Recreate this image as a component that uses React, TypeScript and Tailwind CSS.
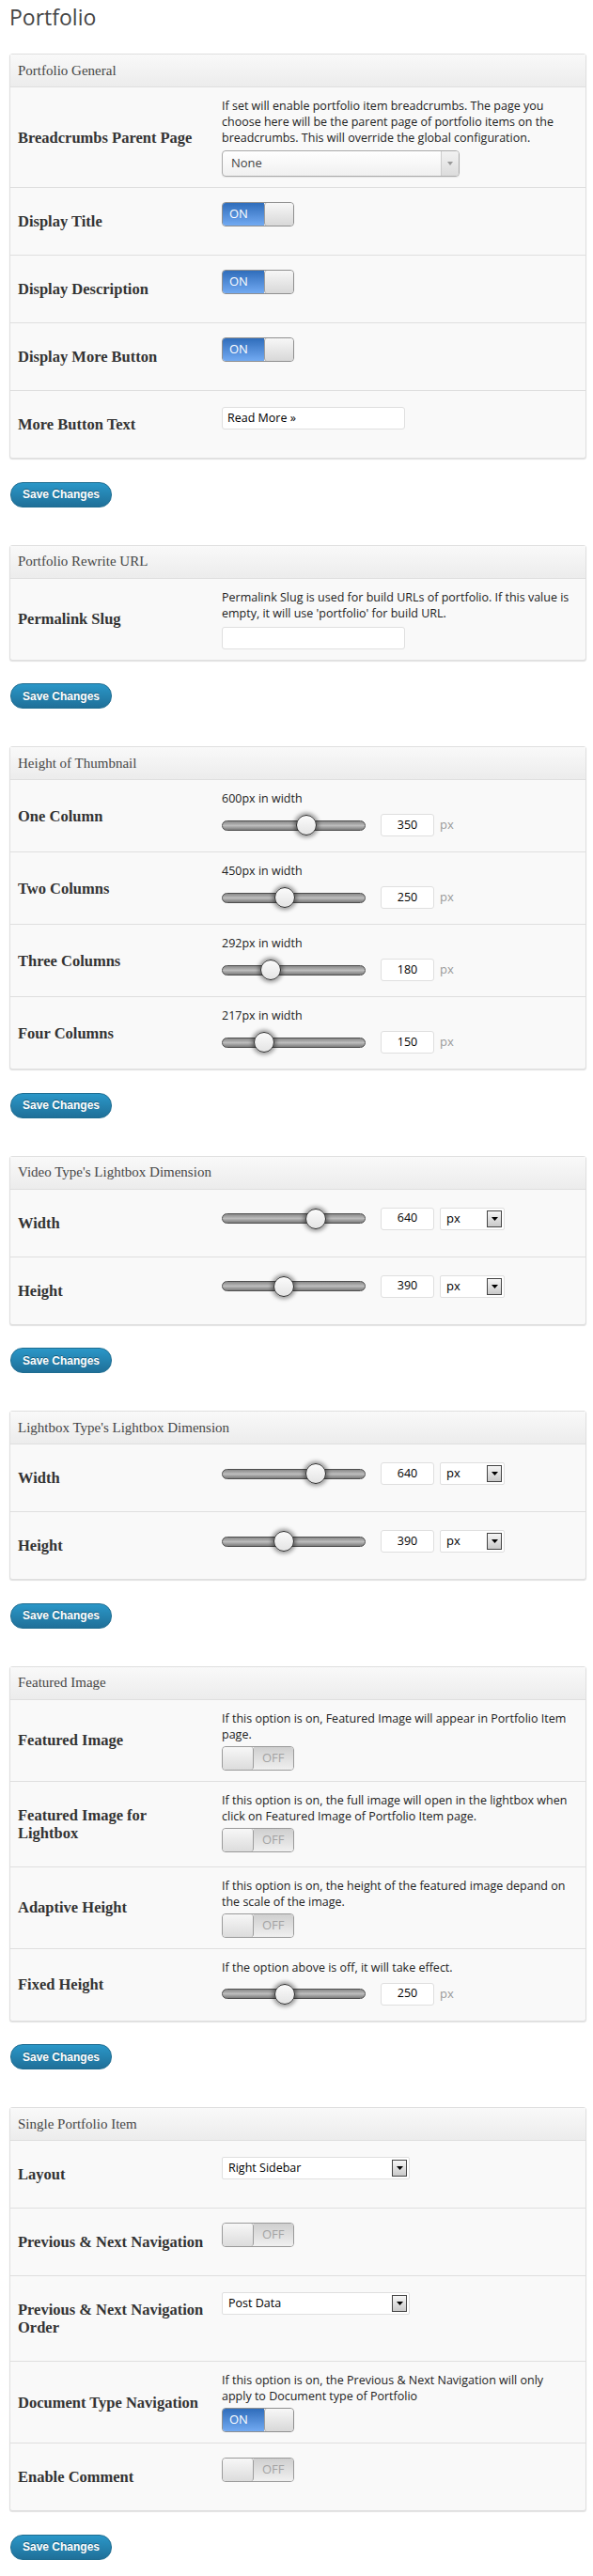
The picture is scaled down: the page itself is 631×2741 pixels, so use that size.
import type { ReactNode } from "react";

const SANS = "font-['Open_Sans',sans-serif]";
const SERIF = "font-['Liberation_Serif',serif]";

function Card({ title, children }: { title: string; children: ReactNode }) {
  return (
    <div className="rounded-[3px] border border-[#dfdfdf] bg-[#f9f9f9] shadow-[0_1px_1px_rgba(0,0,0,0.12)]">
      <div
        className={`flex h-[35px] items-center border-b border-[#dfdfdf] bg-linear-to-b from-[#f9f9f9] to-[#ececec] pl-[8px] text-[15px] text-[#464646] ${SERIF}`}
      >
        {title}
      </div>
      {children}
    </div>
  );
}

function Row({ label, first, children }: { label: string; first?: boolean; children: ReactNode }) {
  return (
    <div className={`flex ${first ? "" : "border-t border-[#dfdfdf]"}`}>
      <div
        className={`flex w-[217px] shrink-0 items-center py-[26px] pl-[8px] pr-[8px] text-[16.5px] font-bold leading-[19px] text-[#333] ${SERIF}`}
      >
        {label}
      </div>
      <div className={`flex-1 pt-[11px] pb-[11px] pl-[8px] pr-[12px] ${SANS}`}>{children}</div>
    </div>
  );
}

function Desc({ children }: { children: ReactNode }) {
  return <p className="text-[12.5px] leading-[17px] text-[#222]">{children}</p>;
}

function Toggle({ on }: { on?: boolean }) {
  if (on) {
    return (
      <div className="mt-[4px] flex h-[26px] w-[77px] overflow-hidden rounded-[4px] border border-[#8f8f8f]">
        <div className="flex w-[44px] items-center bg-linear-to-b from-[#2f6dbb] to-[#72aaf2] pl-[7px] text-[13px] text-white">
          ON
        </div>
        <div className="flex-1 rounded-[3px] border-l border-[#9c9c9c] bg-linear-to-b from-[#f7f7f7] to-[#d8d8d8]" />
      </div>
    );
  }
  return (
    <div className="mt-[4px] flex h-[26px] w-[77px] overflow-hidden rounded-[4px] border border-[#9a9a9a]">
      <div className="w-[33px] rounded-[3px] border-r border-[#9c9c9c] bg-linear-to-b from-[#f7f7f7] to-[#dcdcdc]" />
      <div className="flex flex-1 items-center bg-linear-to-b from-[#cfcfcf] to-[#f0f0f0] pl-[9px] text-[13px] text-[#a3a3a3]">
        OFF
      </div>
    </div>
  );
}

function TextBox({ value, width }: { value: string; width: string }) {
  return (
    <div
      className={`mt-[6px] flex h-[24px] ${width} items-center rounded-[3px] border border-[#dfdfdf] bg-white pl-[5px] text-[12.5px] text-black`}
    >
      {value}
    </div>
  );
}

function ArrowBtn() {
  return (
    <div className="flex h-[18px] w-[16px] items-center justify-center border border-[#444] bg-linear-to-b from-[#f6f6f6] to-[#c9c9c9]">
      <svg width="7" height="4" viewBox="0 0 7 4">
        <polygon points="0,0 7,0 3.5,4" fill="#000" />
      </svg>
    </div>
  );
}

function DropSelect({ value, mt }: { value: string; mt?: boolean }) {
  return (
    <div
      className={`${mt ? "mt-[6px]" : ""} flex h-[24px] w-[200px] items-center justify-between rounded-[2px] border border-[#dfdfdf] bg-white pl-[6px] pr-[2px] text-[12.5px] text-black`}
    >
      <span>{value}</span>
      <ArrowBtn />
    </div>
  );
}

function UnitSelect() {
  return (
    <div className="ml-[6px] flex h-[24px] w-[69px] items-center justify-between rounded-[2px] border border-[#dfdfdf] bg-white pl-[6px] pr-[2px] text-[13px] text-black">
      <span>px</span>
      <ArrowBtn />
    </div>
  );
}

function ChosenSelect({ value }: { value: string }) {
  return (
    <div className="mt-[5px] flex h-[28px] w-[253px] overflow-hidden rounded-[4px] border border-[#aaa] bg-linear-to-b from-[#ffffff] to-[#f0f0f0] shadow-[0_1px_1px_rgba(0,0,0,0.08)]">
      <div className="flex flex-1 items-center pl-[9px] text-[13px] text-[#444]">{value}</div>
      <div className="flex w-[19px] items-center justify-center border-l border-[#ccc] bg-linear-to-b from-[#f2f2f2] to-[#dcdcdc]">
        <svg width="6" height="4" viewBox="0 0 6 4">
          <polygon points="0,0 6,0 3,4" fill="#999" />
        </svg>
      </div>
    </div>
  );
}

function Slider({ pos, value, unit }: { pos: number; value: string; unit?: "select" }) {
  return (
    <div className="mt-[3px] flex h-[34px] items-center">
      <div className="relative h-[11px] w-[153px] rounded-full border border-[#4e4e4e] bg-linear-to-b from-[#8a8a8a] via-[#bdbdbd] to-[#7c7c7c]">
        <div
          className="absolute top-1/2 h-[22px] w-[22px] -translate-y-1/2 rounded-full border border-[#2b2b2b] bg-linear-to-b from-[#fbfbfb] to-[#e4e4e4] shadow-[0_0_4px_2px_rgba(0,0,0,0.4)]"
          style={{ left: pos }}
        />
      </div>
      <div className="ml-[16px] flex h-[24px] w-[57px] items-center justify-center rounded-[3px] border border-[#dfdfdf] bg-white text-[12.5px] text-black">
        {value}
      </div>
      {unit === "select" ? (
        <UnitSelect />
      ) : (
        <span className="ml-[6px] text-[13px] text-[#999]">px</span>
      )}
    </div>
  );
}

function SaveButton() {
  return (
    <div className="mt-[24px] mb-[40px] ml-[1px]">
      <button className="h-[27px] rounded-[13px] border border-[#1f6d91] bg-linear-to-b from-[#2b97c8] to-[#1f7099] px-[12px] font-['Liberation_Sans',Arial,sans-serif] text-[12px] font-bold text-white [text-shadow:0_-1px_0_rgba(0,0,0,0.35)]">
        Save Changes
      </button>
    </div>
  );
}

function DimensionCard({ title }: { title: string }) {
  return (
    <Card title={title}>
      <Row label="Width" first>
        <Slider pos={88} value="640" unit="select" />
      </Row>
      <Row label="Height">
        <Slider pos={54} value="390" unit="select" />
      </Row>
    </Card>
  );
}

export default function App() {
  return (
    <div className="min-h-[2741px] bg-white pl-[10px] pr-[7px] pb-[15px]">
      <h2 className={`pt-[4px] pb-[24px] text-[23px] leading-[29px] text-[#464646] ${SANS}`}>Portfolio</h2>

      <Card title="Portfolio General">
        <Row label="Breadcrumbs Parent Page" first>
          <Desc>
            If set will enable portfolio item breadcrumbs. The page you choose here will be the parent page of
            portfolio items on the breadcrumbs. This will override the global configuration.
          </Desc>
          <ChosenSelect value="None" />
        </Row>
        <Row label="Display Title">
          <Toggle on />
        </Row>
        <Row label="Display Description">
          <Toggle on />
        </Row>
        <Row label="Display More Button">
          <Toggle on />
        </Row>
        <Row label="More Button Text">
          <TextBox value="Read More »" width="w-[195px]" />
        </Row>
      </Card>
      <SaveButton />

      <Card title="Portfolio Rewrite URL">
        <Row label="Permalink Slug" first>
          <Desc>
            Permalink Slug is used for build URLs of portfolio. If this value is empty, it will use 'portfolio' for
            build URL.
          </Desc>
          <TextBox value="" width="w-[195px]" />
        </Row>
      </Card>
      <SaveButton />

      <Card title="Height of Thumbnail">
        <Row label="One Column" first>
          <Desc>600px in width</Desc>
          <Slider pos={78} value="350" />
        </Row>
        <Row label="Two Columns">
          <Desc>450px in width</Desc>
          <Slider pos={55} value="250" />
        </Row>
        <Row label="Three Columns">
          <Desc>292px in width</Desc>
          <Slider pos={40} value="180" />
        </Row>
        <Row label="Four Columns">
          <Desc>217px in width</Desc>
          <Slider pos={33} value="150" />
        </Row>
      </Card>
      <SaveButton />

      <DimensionCard title="Video Type's Lightbox Dimension" />
      <SaveButton />

      <DimensionCard title="Lightbox Type's Lightbox Dimension" />
      <SaveButton />

      <Card title="Featured Image">
        <Row label="Featured Image" first>
          <Desc>If this option is on, Featured Image will appear in Portfolio Item page.</Desc>
          <Toggle />
        </Row>
        <Row label="Featured Image for Lightbox">
          <Desc>
            If this option is on, the full image will open in the lightbox when click on Featured Image of Portfolio
            Item page.
          </Desc>
          <Toggle />
        </Row>
        <Row label="Adaptive Height">
          <Desc>If this option is on, the height of the featured image depand on the scale of the image.</Desc>
          <Toggle />
        </Row>
        <Row label="Fixed Height">
          <Desc>If the option above is off, it will take effect.</Desc>
          <Slider pos={55} value="250" />
        </Row>
      </Card>
      <SaveButton />

      <Card title="Single Portfolio Item">
        <Row label="Layout" first>
          <DropSelect value="Right Sidebar" mt />
        </Row>
        <Row label="Previous & Next Navigation">
          <Toggle />
        </Row>
        <Row label="Previous & Next Navigation Order">
          <DropSelect value="Post Data" mt />
        </Row>
        <Row label="Document Type Navigation">
          <Desc>
            If this option is on, the Previous & Next Navigation will only apply to Document type of Portfolio
          </Desc>
          <Toggle on />
        </Row>
        <Row label="Enable Comment">
          <Toggle />
        </Row>
      </Card>
      <div className="mt-[24px] ml-[1px]">
        <button className="h-[27px] rounded-[13px] border border-[#1f6d91] bg-linear-to-b from-[#2b97c8] to-[#1f7099] px-[12px] font-['Liberation_Sans',Arial,sans-serif] text-[12px] font-bold text-white [text-shadow:0_-1px_0_rgba(0,0,0,0.35)]">
          Save Changes
        </button>
      </div>
    </div>
  );
}
